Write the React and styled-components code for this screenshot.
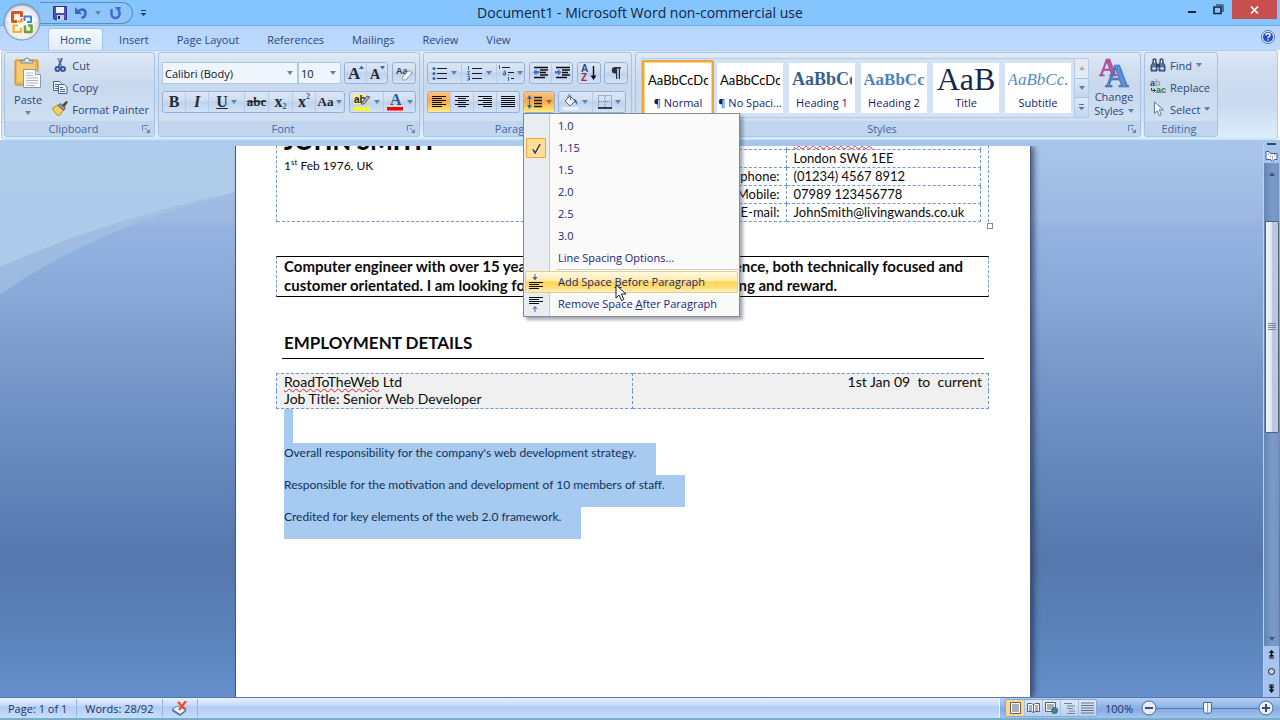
import React from "react";
import styled, { createGlobalStyle, css } from "styled-components";

const uiFont = `"Open Sans", "Noto Sans", sans-serif`;
const docFont = `Lato, "Open Sans", sans-serif`;
const serifFont = `"Liberation Serif", serif`;
const navy = "#2b477c";

const GlobalStyle = createGlobalStyle`
  *, *::before, *::after { box-sizing: border-box; }
  body { margin: 0; font-family: ${uiFont}; font-size: 11px; color: ${navy}; }
  button, select, input { font: inherit; color: inherit; margin: 0; }
  button { background: none; border: 0; padding: 0; cursor: default; }
  svg { display: block; flex: none; }
`;

/* ---------- window frame ---------- */

const Window = styled.div`
  display: flex;
  flex-direction: column;
  height: 100vh;
  overflow: hidden;
`;

const TitleBar = styled.header`
  position: relative;
  display: grid;
  grid-template-columns: 1fr auto 1fr;
  align-items: center;
  height: 26px;
  background: #84c5ff;
  border-bottom: 1px solid #6fa9df;
`;

const TitleTools = styled.div`
  display: flex;
  align-items: center;
  padding-left: 40px;
`;

const Orb = styled.button`
  position: absolute;
  left: 3px;
  top: 3px;
  z-index: 3;
`;

const QuickAccess = styled.div`
  display: flex;
  align-items: center;
  gap: 8px;
  width: 93px;
  height: 22px;
  padding-left: 13px;
  border: 1px solid #5b8fc4;
  border-left: 0;
  border-radius: 0 11px 11px 0;
  background: #8fc6f8;
`;

const MoreButton = styled.button`
  margin-left: 7px;
`;

const Title = styled.h1`
  margin: 0;
  text-align: center;
  font-size: 14px;
  line-height: 26px;
  font-weight: 400;
  color: #14243c;
`;

const WindowButtons = styled.div`
  display: flex;
  align-self: flex-start;
  justify-content: flex-end;
  padding-right: 3px;
`;

const WindowButton = styled.button`
  display: flex;
  align-items: center;
  justify-content: center;
  width: ${(p) => (p.$close ? 45 : 27)}px;
  height: 19px;
  background: ${(p) => (p.$close ? "#c84f50" : "none")};
`;

const TabStrip = styled.nav`
  display: flex;
  align-items: flex-end;
  gap: 4px;
  height: 24px;
  padding: 0 5px 0 48px;
  background: linear-gradient(#b6d5fd, #bedafd);
`;

const Tab = styled.button`
  height: 22px;
  padding: 0 11px;
  font-size: 11px;
  line-height: 20px;
  border: 1px solid transparent;
  border-bottom: 0;
  border-radius: 3px 3px 0 0;
  ${(p) =>
    p.$active &&
    css`
      background: linear-gradient(#f4f9ff, #e1ecf9);
      border-color: #9fc1ec;
    `}
`;

const HelpButton = styled.button`
  margin: 0 0 6px auto;
`;

/* ---------- ribbon ---------- */

const Ribbon = styled.section`
  position: relative;
  z-index: 2;
  display: flex;
  gap: 3px;
  height: 90px;
  margin: 0 2px 0 1px;
  padding: 1px 2px;
  background: linear-gradient(#dfe9f6, #d0def0 22%, #c9daf0 60%, #dcedfb);
  border: 1px solid #b0cbee;
  border-bottom: 2px solid #c5e8ff;
  border-radius: 3px;
`;

const Group = styled.section`
  display: flex;
  flex-direction: column;
  flex: none;
  width: ${(p) => p.$width}px;
  border: 1px solid #a8c2e4;
  border-radius: 3px;
  background: linear-gradient(#dfe8f5, #d2dff0 20%, #c8d9ee 40%, #d3e3f5);
`;

const GroupBody = styled.div`
  flex: 1;
  display: flex;
  flex-direction: ${(p) => (p.$rows ? "column" : "row")};
  gap: ${(p) => (p.$rows ? 7 : 0)}px;
  padding: ${(p) => (p.$rows ? "9px 3px 0" : "1px 5px 0")};
`;

const GroupFooter = styled.footer`
  display: flex;
  align-items: center;
  height: 15px;
  padding-right: 4px;
  background: #c1d5ee;
  color: #44699f;
  font-size: 11px;
  line-height: 15px;
`;

const GroupName = styled.span`
  flex: 1;
  text-align: center;
`;

const ToolRow = styled.div`
  display: flex;
  height: 22px;
`;

const ToolSet = styled.div`
  position: relative;
  display: flex;
  height: 22px;
  margin-right: ${(p) => p.$gap || 0}px;
  border: 1px solid #96b1d7;
  border-radius: 3px;
  background: linear-gradient(#dde8f6, #cddcf0 45%, #bfd2ec 50%, #d2e2f6);
`;

const Tool = styled.button`
  display: flex;
  align-items: center;
  justify-content: center;
  gap: 3px;
  width: ${(p) => p.$width}px;
  color: #23292f;
  font-family: ${serifFont};
  font-size: 16px;
  line-height: 20px;
  font-weight: 700;
  font-style: ${(p) => (p.$italic ? "italic" : "normal")};
  & + & {
    border-left: 1px solid #b7cbe6;
  }
  ${(p) =>
    p.$on &&
    css`
      background: linear-gradient(#f9c583, #f6a94d 45%, #fdd25f 80%, #fff08e);
    `}
`;

const SmallGlyph = styled.span`
  font-size: 13px;
  text-decoration: ${(p) => p.$line || "none"};
`;

const Script = styled.span`
  align-self: ${(p) => (p.$up ? "flex-start" : "flex-end")};
  margin-left: -3px;
  font-size: 8px;
  line-height: 10px;
  color: #2c5aa8;
`;

const Combo = styled.label`
  display: grid;
  width: ${(p) => p.$width}px;
  margin-right: ${(p) => p.$gap || 0}px;
  height: 22px;
  background: #eff5fd;
  border: 1px solid #b0c7e6;
  align-items: center;
  > * {
    grid-area: 1 / 1;
  }
  > svg {
    justify-self: end;
    margin-right: 4px;
    pointer-events: none;
  }
`;

const ComboSelect = styled.select`
  appearance: none;
  width: 100%;
  height: 20px;
  padding: 0 0 0 2px;
  border: 0;
  background: none;
  color: #10151d;
  font-size: 11px;
`;

const BigButton = styled.button`
  display: flex;
  flex-direction: column;
  align-items: center;
  width: ${(p) => p.$width}px;
  margin-top: 3px;
  font-size: 11px;
  line-height: 13px;
  gap: ${(p) => p.$gap}px;
  align-self: flex-start;
`;

const Inline = styled.span`
  display: flex;
  align-items: center;
  gap: 4px;
`;

const Stack = styled.div`
  display: flex;
  flex-direction: column;
`;

const SmallButton = styled.button`
  display: flex;
  align-items: center;
  gap: 4px;
  height: 22px;
  font-size: 11px;
  white-space: nowrap;
`;

const ClipItem = styled(SmallButton)`
  margin-left: 6px;
`;

const Gallery = styled.div`
  display: flex;
  width: 449px;
  height: 60px;
  margin: 4px 4px 0 0;
  border: 1px solid #b5cbe8;
  background: #d3e2f5;
`;

const StyleTile = styled.button`
  display: flex;
  flex-direction: column;
  width: 72px;
  height: 56px;
  margin-top: 1px;
  padding: 1px;
  border: 2px solid ${(p) => (p.$on ? "#eda53d" : "transparent")};
  border-radius: 2px;
  background: ${(p) => (p.$on ? "#ffd777" : "none")};
`;

const TileFace = styled.span`
  display: flex;
  flex-direction: column;
  width: 100%;
  height: 100%;
  padding: 0 3px;
  background: #fff;
  overflow: hidden;
`;

const Sample = styled.span`
  display: flex;
  align-items: center;
  justify-content: ${(p) => (p.$center ? "center" : "flex-start")};
  height: 33px;
  overflow: hidden;
  white-space: nowrap;
  font-family: ${(p) => (p.$serif ? serifFont : docFont)};
  font-size: ${(p) => p.$size}px;
  font-weight: ${(p) => (p.$bold ? 700 : 400)};
  font-style: ${(p) => (p.$italic ? "italic" : "normal")};
  color: ${(p) => p.$color};
`;

const TileName = styled.span`
  height: 16px;
  font-size: 11px;
  line-height: 13px;
  white-space: nowrap;
  text-align: center;
  margin: 0 -4px;
  color: #161b6d;
`;

const GalleryArrows = styled.div`
  display: flex;
  flex-direction: column;
  flex: 1;
  border-left: 1px solid #b5cbe8;
`;

const GalleryArrow = styled.button`
  flex: 1;
  display: flex;
  align-items: center;
  justify-content: center;
  background: ${(p) => (p.$off ? "#e6e9ee" : "linear-gradient(#dce9f9, #c2d6f0)")};
  & + & {
    border-top: 1px solid #a8c2e4;
  }
`;

/* ---------- drop-down menu ---------- */

const Menu = styled.div`
  position: absolute;
  left: -1px;
  top: 21px;
  width: 217px;
  padding: 1px 0;
  border: 1px solid #858a92;
  background: linear-gradient(90deg, #e9edf1 25px, #c6c9ce 25px, #c6c9ce 26px, #fafafb 26px);
  box-shadow: 3px 3px 3px rgba(40, 50, 70, 0.4);
  font-family: ${uiFont};
  font-weight: 400;
`;

const MenuItem = styled.button`
  display: grid;
  grid-template-columns: 25px 1fr;
  column-gap: 8px;
  align-items: center;
  width: calc(100% - 2px);
  margin-left: 1px;
  height: 22px;
  text-align: left;
  font-size: 11px;
  line-height: 20px;
  color: #17267a;
  border-radius: 2px;
  ${(p) =>
    p.$hot &&
    css`
      background: linear-gradient(#fffbe8, #ffeaa8 45%, #ffd34e 50%, #ffdf7c 75%, #fff3c4);
      box-shadow: inset 0 0 0 1px #e3cf8c;
    `}
`;

const MenuIcon = styled.span`
  display: flex;
  align-items: center;
  justify-content: center;
  width: 20px;
  height: 20px;
  margin-left: 1px;
  ${(p) =>
    p.$checked &&
    css`
      background: #ffdf94;
      border: 1px solid #f0a540;
      border-radius: 1px;
    `}
`;

const MenuRule = styled.hr`
  height: 1px;
  margin: 0 0 1px 33px;
  border: 0;
  background: #c9cbcf;
`;

const Pointer = styled.svg`
  position: absolute;
  left: 91px;
  top: 170px;
  pointer-events: none;
`;

/* ---------- document ---------- */

const Workspace = styled.main`
  position: relative;
  flex: 1;
  display: flex;
  min-height: 0;
  padding-top: 6px;
  overflow: hidden;
  background: linear-gradient(
    #aac5ea,
    #9eb9e1 14%,
    #94b2e1 16%,
    #8fb0de 21%,
    #7c9bcb 39%,
    #7293c5 46%,
    #6084b9 63%,
    #5577ae 75%,
    #5b85bc 90%,
    #668fcc
  );
`;

const Swoosh = styled.svg`
  position: absolute;
  left: 0;
  top: 0;
`;

const Viewport = styled.div`
  position: relative;
  flex: 1;
  display: flex;
  justify-content: center;
  overflow: hidden;
  padding-left: 3px;
`;

const Page = styled.article`
  width: 794px;
  height: 100%;
  overflow: hidden;
  padding: 0 41px 0 40px;
  background: #fff;
  box-shadow: -1px 0 0 #46597c, 1px 0 0 #46597c, 4px 0 6px rgba(30, 45, 80, 0.7);
  font-family: ${docFont};
  color: #0b0b0b;
`;

const Scrolled = styled.div`
  margin-top: -15px;
`;

const dashed = "1px dashed #7398cf";

const ContactGrid = styled.div`
  position: relative;
  display: grid;
  grid-template-columns: 356px 1fr;
  height: 91px;
  border-left: ${dashed};
  border-right: ${dashed};
`;

const Person = styled.div`
  padding-left: 7px;
  border-bottom: ${dashed};
`;

const PersonName = styled.h2`
  margin: -6px 0 0;
  font-size: 24px;
  line-height: 32px;
  font-weight: 900;
`;

const Born = styled.p`
  margin: 0;
  font-size: 12px;
  line-height: 18px;
  sup {
    font-size: 8px;
    line-height: 8px;
  }
`;

const ContactTable = styled.table`
  width: calc(100% - 7px);
  height: 91px;
  border-collapse: collapse;
  border-bottom: ${dashed};
  font-size: 13px;
  line-height: 17px;
  th,
  td {
    height: 18px;
    padding: 0 7px;
    font-weight: 400;
    text-align: left;
    border-right: ${dashed};
    border-bottom: ${dashed};
    white-space: nowrap;
  }
  th {
    width: 153px;
    text-align: right;
    padding-right: 6px;
  }
`;

const Misspelt = styled.span`
  text-decoration: underline wavy #e0202c 1px;
  text-decoration-skip-ink: none;
`;

const ResizeHandle = styled.span`
  position: absolute;
  right: -5px;
  bottom: -7px;
  width: 6px;
  height: 6px;
  border: 1px solid #8a8a8a;
  background: #fff;
`;

const Summary = styled.div`
  height: 41px;
  margin-top: 34px;
  padding: 0 7px;
  border: 1px solid #000;
  border-left: ${dashed};
  border-right: ${dashed};
  font-size: 15px;
  line-height: 19px;
  font-weight: 700;
`;

const SummaryLine = styled.div`
  display: flex;
  justify-content: space-between;
  width: ${(p) => p.$width}px;
  white-space: nowrap;
`;

const SectionTitle = styled.h3`
  margin: 34px 5px 14px 6px;
  padding: 0 0 3px 2px;
  border-bottom: 1px solid #000;
  font-size: 17px;
  line-height: 24px;
  font-weight: 700;
`;

const JobTable = styled.table`
  width: 100%;
  height: 35px;
  border-collapse: collapse;
  table-layout: fixed;
  background: #f0f0f0;
  font-size: 14px;
  line-height: 16px;
  td {
    height: 17px;
    padding: 0 7px 1px;
    vertical-align: top;
    border-left: ${dashed};
    border-right: ${dashed};
  }
  tr:first-child td {
    border-top: ${dashed};
  }
  tr:last-child td {
    border-bottom: ${dashed};
  }
  td + td {
    text-align: right;
    padding-right: 6px;
    white-space: pre;
  }
`;

const Selection = styled.div`
  display: flex;
  flex-direction: column;
  align-items: flex-start;
  padding-left: 8px;
`;

const SelectedLine = styled.p`
  min-width: 9px;
  height: ${(p) => (p.$blank ? 34 : 32)}px;
  margin: 0;
  padding-right: ${(p) => (p.$blank ? 0 : 20)}px;
  background: #a6caf0;
  color: #123257;
  font-size: 12px;
  line-height: 19px;
  white-space: nowrap;
`;

/* ---------- scroll bar ---------- */

const ScrollColumn = styled.div`
  display: flex;
  flex-direction: column;
  align-items: center;
  width: 16px;
  margin: -4px 1px 0 0;
  border-left: 1px solid #b4d4fa;
  background: #a7c3ee;
`;

const SplitBar = styled.span`
  width: 9px;
  height: 2px;
  margin: 1px 0 5px;
  background: #33466b;
`;

const Track = styled.div`
  display: flex;
  flex-direction: column;
  align-items: center;
  flex: 1;
  width: 100%;
  margin-top: 1px;
  background: linear-gradient(90deg, #6486b5, #7b9ac6 60%, #7693c0);
`;

const TrackGap = styled.div`
  flex: ${(p) => p.$grow};
`;

const Thumb = styled.div`
  display: flex;
  align-items: center;
  justify-content: center;
  flex: 212;
  width: 14px;
  border: 1px solid #52627d;
  border-radius: 1px;
  background: linear-gradient(90deg, #f3f5fa, #e1e7f2 45%, #b9c6da 55%, #bccadb);
`;

const ScrollButton = styled.button`
  display: flex;
  align-items: center;
  justify-content: center;
  height: ${(p) => p.$height}px;
`;

/* ---------- status bar ---------- */

const StatusBar = styled.footer`
  display: flex;
  align-items: center;
  height: 23px;
  border-top: 1px solid #5877a8;
  border-bottom: 2px solid #79aec9;
  background: linear-gradient(#e6f1ff, #c7dcfa 35%, #b1cdf6 45%, #c9defb);
  color: #1c3567;
  font-size: 11px;
`;

const StatusCell = styled.div`
  display: flex;
  align-items: center;
  height: 18px;
  padding: 0 9px 0 8px;
  border-right: 1px solid #94b3dd;
`;

const ViewControls = styled.div`
  display: flex;
  align-items: center;
  align-self: stretch;
  margin-left: auto;
  padding: 0 6px 0 5px;
  border-left: 1px solid #eef6ff;
  background: linear-gradient(#b5cff5, #8fb3e6 45%, #86abe2 55%, #a4c4f0);
`;

const ViewSet = styled.div`
  display: flex;
  height: 18px;
  border: 1px solid #87a8d6;
  border-radius: 2px;
  background: linear-gradient(#dce9fb, #b9d0f0);
`;

const ViewButton = styled.button`
  display: flex;
  align-items: center;
  justify-content: center;
  width: 18px;
  background: ${(p) => (p.$on ? "#fbd68c" : "none")};
  & + & {
    border-left: 1px solid #a8c2e4;
  }
`;

const ZoomLabel = styled.button`
  width: 44px;
  font-size: 11px;
`;

const ZoomSlider = styled.input`
  appearance: none;
  width: 101px;
  height: 18px;
  background: linear-gradient(#5b7db1, #5b7db1) center / 100% 1px no-repeat;
  &::-webkit-slider-thumb {
    appearance: none;
    width: 9px;
    height: 12px;
    border: 1px solid #4b6793;
    border-radius: 1px 1px 5px 5px;
    background: linear-gradient(90deg, #f4f8fe 3px, #8aa2c8 3px, #8aa2c8 4px, #e5edf9 4px);
  }
`;

/* ---------- icons ---------- */

const Arrow = ({ up, color = "#6480ab" }) => (
  <svg width="6" height="4" viewBox="0 0 6 4">
    <path d={up ? "M0 4h6L3 0z" : "M0 0h6L3 4z"} fill={color} />
  </svg>
);

const Launcher = () => (
  <svg width="8" height="8" viewBox="0 0 8 8" fill="none" stroke="#6884b0">
    <path d="M0.5 6V0.5H6M3 3l3 3" />
    <path d="M8 4v4H4z" fill="#6884b0" stroke="none" />
  </svg>
);

const OrbIcon = () => (
  <svg width="38" height="38" viewBox="0 0 38 38">
    <defs>
      <radialGradient id="orb" cx="50%" cy="62%" r="62%">
        <stop offset="0" stopColor="#fff" />
        <stop offset="0.6" stopColor="#e8ebf1" />
        <stop offset="1" stopColor="#a4afc3" />
      </radialGradient>
    </defs>
    <circle cx="19" cy="19" r="18" fill="url(#orb)" stroke="#7d8ba5" />
    <path d="M3 18a16 15 0 0 1 32 0q-16 5-32 0z" fill="#fff" opacity=".55" />
    <g fill="none" strokeLinejoin="round">
      <path d="M14 18.500H9.500V9.500H18.500V14" stroke="#dd5513" strokeWidth="3" />
      <path d="M15 18.500h3.500V15" stroke="#f08a2c" strokeWidth="2" />
      <path d="M21.500 18v-4.500H28V19h-4" stroke="#3e84d6" strokeWidth="2" />
      <path d="M15 22.500h-4.500v6.500h7.500V24.500" stroke="#f2b61c" strokeWidth="2.200" />
      <path d="M22 22.500v6.500h6.500v-6.500h-3.500" stroke="#6ba52f" strokeWidth="2.600" />
    </g>
  </svg>
);

const SaveIcon = () => (
  <svg width="14" height="14" viewBox="0 0 14 14">
    <path d="M0.500 0.500h13v13h-12l-1-1z" fill="#4b51b5" stroke="#2d3191" />
    <path d="M3 1h8v6H3z" fill="#eef2fb" />
    <path d="M4 9h7v5H4z" fill="#c4cce0" />
    <path d="M5 10h2v3H5z" fill="#20246f" />
  </svg>
);

const UndoIcon = () => (
  <svg width="12" height="12" viewBox="0 0 12 12" fill="none" stroke="#4467bd" strokeWidth="2.600">
    <path d="M3 4.500C6 1.500 10.500 2 10.500 6c0 3-2 4.500-4 5" />
    <path d="M0 0v7h7z" fill="#4467bd" stroke="none" />
  </svg>
);

const RedoIcon = () => (
  <svg width="13" height="13" viewBox="0 0 13 13" fill="none" stroke="#3f6fd0" strokeWidth="2.600">
    <path d="M2.500 2v5a4 4 0 0 0 8 0V4" />
    <path d="M6 0h6l-2 6z" fill="#3f6fd0" stroke="none" />
  </svg>
);

const MoreIcon = ({ color = "#1c3c6e" }) => (
  <svg width="7" height="7" viewBox="0 0 7 7" fill={color}>
    <path d="M1 0h5v1H1zM0.500 3h6l-3 3z" />
  </svg>
);

const HelpIcon = () => (
  <svg width="14" height="14" viewBox="0 0 14 14">
    <circle cx="7" cy="7" r="6.500" fill="#d9e9fc" stroke="#5476ad" />
    <circle cx="7" cy="7" r="5" fill="#1f4fc0" />
    <path d="M5 5.500q0-2 2-2t2 1.700q0 1-1.200 1.600-.8.400-.8 1.400M7 9.300v1.300" fill="none" stroke="#fff" strokeWidth="1.400" />
  </svg>
);

const PasteIcon = () => (
  <svg width="28" height="31" viewBox="0 0 28 31">
    <rect x="1" y="3" width="23" height="25" rx="1.500" fill="#edb64f" stroke="#bd8a35" />
    <path d="M3 5h18v20H3z" fill="#f5ca73" />
    <path d="M7 6V3.500h3.500a2.500 2.500 0 0 1 5 0H19V6z" fill="#d3d8dd" stroke="#7a838d" />
    <circle cx="13" cy="3" r="1" fill="#fff" />
    <path d="M9.500 12.500h12l5 5v13h-17z" fill="#fff" stroke="#8698b4" />
    <path d="M21.500 12.500v5h5" fill="#dfe7f2" stroke="#8698b4" />
    <path d="M12 16h7M12 18.500h7M12 21h12M12 23.500h12M12 26h12M12 28.500h9" stroke="#a9b6c9" />
  </svg>
);

const CutIcon = () => (
  <svg width="16" height="16" viewBox="0 0 16 16" fill="none">
    <path d="M6 1l4 10" stroke="#7f8ea8" strokeWidth="2" />
    <path d="M10 1L6.500 10" stroke="#4f6287" strokeWidth="2" />
    <circle cx="5.500" cy="12" r="2" stroke="#3257a5" strokeWidth="2" />
    <circle cx="11" cy="12" r="2" stroke="#3257a5" strokeWidth="2" />
  </svg>
);

const CopyIcon = () => (
  <svg width="16" height="16" viewBox="0 0 16 16" stroke="#49639a">
    <path d="M1.500 2.500h6l2 2v7h-8z" fill="#f7faff" />
    <path d="M3 5.500h3M3 7.500h3M3 9.500h3" />
    <path d="M6.500 5.500h6l2.500 2.500v6.500H6.500z" fill="#f7faff" />
    <path d="M8 8.500h3M8 10.500h5M8 12.500h5" />
  </svg>
);

const PainterIcon = () => (
  <svg width="16" height="16" viewBox="0 0 16 16">
    <path d="M0.500 7l5-3 6 5-4 5.500q-4 0-7-7.500z" fill="#f0d163" stroke="#b38f2b" />
    <path d="M6 4.500l2-2 5.500 4.500-2 2.500z" fill="#8c95a5" stroke="#5c6370" />
    <path d="M10 4l4-4 2 1-3.500 5z" fill="#52473f" />
  </svg>
);

const ClearIcon = () => (
  <svg width="18" height="18" viewBox="0 0 18 18">
    <text x="1" y="10" fontFamily="Liberation Sans" fontSize="9" fontWeight="700" fill="#33373d">Aa</text>
    <path d="M7 14l6-7q3-1 4 2l-6 7q-3 1-4-2z" fill="#f7f8fb" stroke="#8790a3" />
  </svg>
);

const HighlightIcon = () => (
  <svg width="18" height="18" viewBox="0 0 18 18">
    <path d="M1 1h10v10H1z" fill="#f3f08a" />
    <text x="1" y="10" fontFamily="Liberation Sans" fontSize="10" fill="#222">ab</text>
    <path d="M8 11l6-8 3 1-6 7z" fill="#a8b0bd" stroke="#565d69" />
    <path d="M1 14h16v3.500H1z" fill="#ffff00" />
  </svg>
);

const FontColorIcon = () => (
  <svg width="17" height="18" viewBox="0 0 17 18">
    <text x="3" y="12" fontFamily="Liberation Serif" fontSize="16" fontWeight="700" fill="#35568f">A</text>
    <path d="M0 14h16v3.500H0z" fill="#ff0000" />
  </svg>
);

const SizeIcon = ({ up }) => (
  <svg width="18" height="18" viewBox="0 0 18 18">
    <text x={up ? 1 : 2} y="15" fontFamily="Liberation Serif" fontSize={up ? 17 : 14} fontWeight="700" fill="#23292f">A</text>
    <path d={up ? "M12 5h5l-2.500-3.500z" : "M12 2h5l-2.500 3.500z"} fill="#3d63a6" />
  </svg>
);

const ListIcon = ({ kind }) => (
  <svg width="16" height="16" viewBox="0 0 16 16">
    {kind === "bullets" && (
      <g fill="#3f61a3">
        <circle cx="2" cy="3.500" r="1.500" />
        <circle cx="2" cy="8.500" r="1.500" />
        <circle cx="2" cy="13.500" r="1.500" />
      </g>
    )}
    {kind === "numbers" && (
      <path d="M1.500 1v4M0.500 6.500h2l-2 3h2.500M0.500 11.500h2v3.500h-2.500M1 13.500h1.500" stroke="#3f61a3" fill="none" />
    )}
    {kind === "levels" ? (
      <g>
        <path d="M1.500 0v4M5.500 6q2-1 2 1v3h-2v-2h2M10.500 12v4M10.500 9.500v1" stroke="#3f61a3" fill="none" />
        <path d="M4 2.500h8M10 7.500h6M13 13.500h3" stroke="#1a1d24" />
      </g>
    ) : (
      <path d="M5 3.500h10M5 8.500h10M5 13.500h10" stroke="#1a1d24" />
    )}
  </svg>
);

const IndentIcon = ({ right }) => (
  <svg width="17" height="14" viewBox="0 0 17 14">
    <path d="M2 1.500h14M8 4h8M8 6.500h6M8 9h8M2 11.500h11" stroke="#0c0e14" strokeWidth="1.500" />
    <path d={right ? "M1 5h3V3l3.500 3.200L4 9.500V7.500H1z" : "M7.500 5h-3V3L1 6.200l3.500 3.300V7.500h3z"} fill="#4a6ebb" />
  </svg>
);

const SortIcon = () => (
  <svg width="16" height="18" viewBox="0 0 16 18">
    <text x="0" y="8" fontFamily="Liberation Sans" fontSize="10" fill="#27489b">A</text>
    <text x="0" y="17" fontFamily="Liberation Sans" fontSize="10" fill="#a4293c">Z</text>
    <path d="M12.500 2v12" stroke="#0c0e14" strokeWidth="1.400" />
    <path d="M9.500 11.500h6l-3 4.500z" fill="#0c0e14" />
  </svg>
);

const PilcrowIcon = () => (
  <svg width="12" height="14" viewBox="0 0 12 14">
    <path d="M5 1h6v1.500H10V13H8.800V2.500H7.200V13H6V7.500H5A3.200 3.200 0 0 1 5 1z" fill="#2b3140" />
  </svg>
);

const alignRows = {
  left: [14, 10, 14, 10, 14, 10],
  center: [14, 8, 14, 8, 14, 8],
  right: [14, 9, 14, 9, 14, 9],
  justify: [14, 14, 14, 14, 14, 14],
};

const AlignIcon = ({ kind, color = "#0c0e14" }) => (
  <svg width="14" height="12" viewBox="0 0 14 12" fill={color}>
    {alignRows[kind].map((w, i) => (
      <rect
        key={i}
        x={kind === "center" ? (14 - w) / 2 : kind === "right" ? 14 - w : 0}
        y={i * 2}
        width={w}
        height="1"
      />
    ))}
  </svg>
);

const SpacingIcon = () => (
  <svg width="16" height="16" viewBox="0 0 16 16">
    <path d="M7 3.500h8M7 6.500h8M7 9.500h8M7 12.500h8" stroke="#1a1d24" strokeWidth="1.300" />
    <path d="M0 5h5L2.500 1zM0 11h5l-2.500 4zM2 5h1v6H2z" fill="#3f61b3" />
  </svg>
);

const FillIcon = () => (
  <svg width="16" height="16" viewBox="0 0 16 16">
    <path d="M2 7l5-5 5 5-5 5z" fill="#f3f6fb" stroke="#56698d" />
    <path d="M5 4V1.500q1.500-2 2.500 0V6" fill="none" stroke="#56698d" />
    <path d="M11 5q4 1 3 6-1-3-3-3z" fill="#3865ac" />
    <path d="M0 13h15v3H0z" fill="#eef3fb" />
  </svg>
);

const BorderIcon = () => (
  <svg width="14" height="14" viewBox="0 0 14 14">
    <path d="M.5.500h13v12H.5zM7 1v11M1 6.500h12" fill="none" stroke="#6d7c98" strokeDasharray="1 1" />
    <path d="M0 13h14" stroke="#0c0e14" strokeWidth="1.500" />
  </svg>
);

const ChangeStylesIcon = () => (
  <svg width="30" height="32" viewBox="0 0 30 32">
    <text x="0" y="19" fontFamily="Liberation Serif" fontSize="25" fontWeight="700" fill="#c251a8" stroke="#8b3b86" strokeWidth=".5">A</text>
    <text x="6" y="30" fontFamily="Liberation Serif" fontSize="33" fontWeight="700" fill="#5a90d8" stroke="#315a9d" strokeWidth=".7">A</text>
  </svg>
);

const FindIcon = () => (
  <svg width="16" height="14" viewBox="0 0 16 14">
    <path d="M3 1h3v3l1 2v7H1V8l2-4zM10 1h3v3l2 4v5H9V6l1-2z" fill="#5c7198" stroke="#2e426c" />
    <path d="M6 6h4v3H6z" fill="#2e426c" />
    <path d="M2.500 9.500h3v2h-3zM10.500 9.500h3v2h-3zM4 2h1v3H4zM11 2h1v3h-1z" fill="#e9eff8" />
  </svg>
);

const ReplaceIcon = () => (
  <svg width="16" height="16" viewBox="0 0 16 16">
    <text x="0" y="7" fontFamily="Liberation Sans" fontSize="9" fontWeight="700" fill="#3b4048">a<tspan fill="#979ca6">b</tspan></text>
    <text x="6" y="14" fontFamily="Liberation Sans" fontSize="9" fontWeight="700" fill="#2f7a2b">ac</text>
    <path d="M1.500 9v2.500H5M3.500 9.500l2 2-2 2" fill="none" stroke="#2b3a6b" />
  </svg>
);

const arrowPath = "M1 1v13l3-3 2.500 5.500 2.300-1L6.300 10H11z";

const SelectIcon = () => (
  <svg width="16" height="16" viewBox="-3 0 16 18">
    <path d={arrowPath} fill="#fff" stroke="#51658f" />
  </svg>
);

const ParagraphSpaceIcon = ({ after }) => (
  <svg width="14" height="16" viewBox="0 0 14 16">
    <path
      d={after ? "M0 1.500h14M0 3.500h10M0 5.500h14M0 7.500h10" : "M0 8.500h14M0 10.500h10M0 12.500h14M0 14.500h10"}
      stroke="#0c0e14"
    />
    <path d={after ? "M3.500 13h5L6 10zM5.500 12h1v4h-1z" : "M3.500 3h5L6 6.500zM5.500 0h1v4h-1z"} fill="#4a63ab" />
  </svg>
);

const ProofIcon = () => (
  <svg width="17" height="15" viewBox="0 0 17 15">
    <path d="M1 8l6-3 8 4-6 4.500z" fill="#f3f7fd" stroke="#5f79a8" />
    <path d="M1 8v2l8 5 6-4.500V9l-6 4.500z" fill="#4d70ae" />
    <path d="M7 1l8 8M15 0L8 9" stroke="#ec4a32" strokeWidth="2.200" />
  </svg>
);

const ViewIcon = ({ kind }) => (
  <svg width="13" height="12" viewBox="0 0 13 12" fill="none" stroke="#5b5f6c">
    {kind === "print" && (
      <>
        <path d="M1.500.500h10v11h-10z" fill="#fff" />
        <path d="M3 3h7M3 5h7M3 7h7M3 9h7" />
      </>
    )}
    {kind === "reading" && (
      <>
        <path d="M.5 1.500h4l2 1 2-1h4v8h-4l-2 1-2-1h-4zM6.500 2.500v8" fill="#fff" />
        <path d="M2 4h3M2 6h3M2 8h3M8 4h3M8 6h3M8 8h3" />
      </>
    )}
    {kind === "web" && (
      <>
        <path d="M.5.500h10v9H.5z" fill="#fff" />
        <path d="M2 3h7M2 5h7M2 7h4" />
        <circle cx="9.500" cy="8.500" r="3" fill="#3f8b8c" stroke="#2e5f96" />
      </>
    )}
    {kind === "outline" && <path d="M1 1.500h8M4 4h8M4 6.500h6M6 9h6M4 11.500h8" stroke="#7a8190" />}
    {kind === "draft" && <path d="M0 1h13M0 3.500h13M0 6h13M0 8.500h13M0 11h13" stroke="#6a707e" />}
  </svg>
);

const ZoomIcon = ({ plus }) => (
  <svg width="16" height="16" viewBox="0 0 16 16">
    <circle cx="8" cy="8" r="7" fill="#e4edf9" stroke="#4d6893" />
    <path d={plus ? "M4 8h8M8 4v8" : "M4 8h8"} stroke="#3b506f" strokeWidth="2" />
  </svg>
);

const RulerIcon = () => (
  <svg width="13" height="12" viewBox="0 0 13 12">
    <path d="M1 1.500h3l1.500 2h6.500v6H9.500l-2 2-2-2H1z" fill="#f2f6fd" stroke="#4d5d80" />
    <path d="M5 6h1M7 7h1M9 5h1M7 9h1M3 4h1" stroke="#5b6b8c" />
  </svg>
);

const BrowseIcon = ({ kind }) => (
  <svg width="9" height="9" viewBox="0 0 9 9" fill="#0c0e14">
    {kind === "prev" && <path d="M4.500 0L7.500 3h-6zM4.500 3.500l3 3h-6zM2 7.500h5v1H2zM4 2h1v5H4z" />}
    {kind === "next" && <path d="M2 .5h5v1H2zM1.500 2.500h6l-3 3zM1.500 5.500h6l-3 3.500zM4 1h1v3H4z" />}
    {kind === "object" && <circle cx="4.500" cy="4.500" r="3" fill="#c9d2dd" stroke="#1a2030" />}
  </svg>
);

/* ---------- sections ---------- */

const RibbonGroup = ({ name, width, launcher = true, children, rows }) => (
  <Group $width={width} aria-label={name}>
    <GroupBody $rows={rows}>{children}</GroupBody>
    <GroupFooter>
      <GroupName>{name}</GroupName>
      {launcher && (
        <button aria-label={`${name} options`}>
          <Launcher />
        </button>
      )}
    </GroupFooter>
  </Group>
);

const ClipboardGroup = () => (
  <RibbonGroup name="Clipboard" width={151}>
    <BigButton $width={38} $gap={5}>
      <PasteIcon />
      Paste
      <Arrow />
    </BigButton>
    <Stack>
      <ClipItem><CutIcon />Cut</ClipItem>
      <ClipItem><CopyIcon />Copy</ClipItem>
      <ClipItem><PainterIcon />Format Painter</ClipItem>
    </Stack>
  </RibbonGroup>
);

const FontGroup = () => (
  <RibbonGroup name="Font" width={262} rows>
    <ToolRow>
      <Combo $width={136}>
        <ComboSelect aria-label="Font" defaultValue="Calibri (Body)">
          <option>Calibri (Body)</option>
        </ComboSelect>
        <Arrow />
      </Combo>
      <Combo $width={43} $gap={3}>
        <ComboSelect aria-label="Font size" defaultValue="10">
          <option>10</option>
        </ComboSelect>
        <Arrow />
      </Combo>
      <ToolSet $gap={4}>
        <Tool $width={21} aria-label="Grow font"><SizeIcon up /></Tool>
        <Tool $width={21} aria-label="Shrink font"><SizeIcon /></Tool>
      </ToolSet>
      <ToolSet>
        <Tool $width={22} aria-label="Clear formatting"><ClearIcon /></Tool>
      </ToolSet>
    </ToolRow>
    <ToolRow>
      <ToolSet $gap={4}>
        <Tool $width={22}>B</Tool>
        <Tool $width={23} $italic>I</Tool>
        <Tool $width={36}><u>U</u> <Arrow /></Tool>
        <Tool $width={24}><SmallGlyph $line="line-through">abc</SmallGlyph></Tool>
        <Tool $width={24}>x<Script>2</Script></Tool>
        <Tool $width={23}>x<Script $up>2</Script></Tool>
        <Tool $width={29}><SmallGlyph>Aa</SmallGlyph><Arrow /></Tool>
      </ToolSet>
      <ToolSet>
        <Tool $width={33} aria-label="Highlight colour"><HighlightIcon /><Arrow /></Tool>
        <Tool $width={32} aria-label="Font colour"><FontColorIcon /><Arrow /></Tool>
      </ToolSet>
    </ToolRow>
  </RibbonGroup>
);

const spacingValues = ["1.0", "1.15", "1.5", "2.0", "2.5", "3.0"];

const SpacingMenu = () => (
  <Menu role="menu">
    {spacingValues.map((value) => (
      <MenuItem key={value} role="menuitem">
        <MenuIcon $checked={value === "1.15"}>
          {value === "1.15" && (
            <svg width="9" height="11" viewBox="0 0 10 12" fill="none" stroke="#27356f" strokeWidth="1.600">
              <path d="M1 7l2.500 4L9 1" />
            </svg>
          )}
        </MenuIcon>
        {value}
      </MenuItem>
    ))}
    <MenuItem role="menuitem">
      <MenuIcon />
      Line Spacing Options...
    </MenuItem>
    <MenuRule />
    <MenuItem role="menuitem" $hot>
      <MenuIcon><ParagraphSpaceIcon /></MenuIcon>
      <span>Add Space <u>B</u>efore Paragraph</span>
    </MenuItem>
    <MenuItem role="menuitem">
      <MenuIcon><ParagraphSpaceIcon after /></MenuIcon>
      <span>Remove Space <u>A</u>fter Paragraph</span>
    </MenuItem>
    <Pointer width="13" height="19" viewBox="0 0 13 19">
      <path d={arrowPath} fill="#fff" stroke="#1d2230" />
    </Pointer>
  </Menu>
);

const ParagraphGroup = () => (
  <RibbonGroup name="Paragraph" width={209} rows>
    <ToolRow>
      <ToolSet $gap={4}>
        <Tool $width={33} aria-label="Bullets"><ListIcon kind="bullets" /><Arrow /></Tool>
        <Tool $width={35} aria-label="Numbering"><ListIcon kind="numbers" /><Arrow /></Tool>
        <Tool $width={28} aria-label="Multilevel list"><ListIcon kind="levels" /><Arrow /></Tool>
      </ToolSet>
      <ToolSet $gap={4}>
        <Tool $width={21} aria-label="Decrease indent"><IndentIcon /></Tool>
        <Tool $width={21} aria-label="Increase indent"><IndentIcon right /></Tool>
      </ToolSet>
      <ToolSet $gap={3}>
        <Tool $width={22} aria-label="Sort"><SortIcon /></Tool>
      </ToolSet>
      <ToolSet>
        <Tool $width={22} aria-label="Show marks"><PilcrowIcon /></Tool>
      </ToolSet>
    </ToolRow>
    <ToolRow>
      <ToolSet $gap={3}>
        <Tool $width={22} $on aria-label="Align left"><AlignIcon kind="left" /></Tool>
        <Tool $width={23} aria-label="Centre"><AlignIcon kind="center" /></Tool>
        <Tool $width={23} aria-label="Align right"><AlignIcon kind="right" /></Tool>
        <Tool $width={23} aria-label="Justify"><AlignIcon kind="justify" /></Tool>
      </ToolSet>
      <ToolSet $gap={3}>
        <Tool $width={30} $on aria-label="Line spacing"><SpacingIcon /><Arrow color="#8b6a4e" /></Tool>
        <SpacingMenu />
      </ToolSet>
      <ToolSet>
        <Tool $width={33} aria-label="Shading"><FillIcon /><Arrow /></Tool>
        <Tool $width={33} aria-label="Borders"><BorderIcon /><Arrow /></Tool>
      </ToolSet>
    </ToolRow>
  </RibbonGroup>
);

const styleTiles = [
  { name: "¶ Normal", text: "AaBbCcDc", size: 13, color: "#000", on: true },
  { name: "¶ No Spaci...", text: "AaBbCcDc", size: 13, color: "#000" },
  { name: "Heading 1", text: "AaBbCc", size: 18, color: "#365f91", serif: true, bold: true },
  { name: "Heading 2", text: "AaBbCc", size: 17, color: "#4f81bd", serif: true, bold: true, center: true },
  { name: "Title", text: "AaB", size: 32, color: "#17294a", serif: true, center: true },
  { name: "Subtitle", text: "AaBbCc.", size: 17, color: "#5b8ac4", serif: true, italic: true, center: true },
];

const StylesGroup = () => (
  <RibbonGroup name="Styles" width={506}>
    <Gallery>
      {styleTiles.map((t) => (
        <StyleTile key={t.name} $on={t.on}>
          <TileFace>
            <Sample $size={t.size} $color={t.color} $serif={t.serif} $bold={t.bold} $italic={t.italic} $center={t.center}>
              {t.text}
            </Sample>
            <TileName>{t.name}</TileName>
          </TileFace>
        </StyleTile>
      ))}
      <GalleryArrows>
        <GalleryArrow $off aria-label="Previous styles"><Arrow up color="#a8adb5" /></GalleryArrow>
        <GalleryArrow aria-label="Next styles"><Arrow /></GalleryArrow>
        <GalleryArrow aria-label="More styles"><MoreIcon color="#5373a6" /></GalleryArrow>
      </GalleryArrows>
    </Gallery>
    <BigButton $width={42} $gap={1}>
      <ChangeStylesIcon />
      <span>Change</span>
      <Inline>Styles <Arrow /></Inline>
    </BigButton>
  </RibbonGroup>
);

const EditingGroup = () => (
  <RibbonGroup name="Editing" width={74} launcher={false}>
    <Stack>
      <SmallButton><FindIcon />Find <Arrow /></SmallButton>
      <SmallButton><ReplaceIcon />Replace</SmallButton>
      <SmallButton><SelectIcon />Select <Arrow /></SmallButton>
    </Stack>
  </RibbonGroup>
);

const contacts = [
  ["", <><Misspelt>Knightsbridge</Misspelt> Rg</>],
  ["", "London SW6 1EE"],
  ["Telephone:", "(01234) 4567 8912"],
  ["Mobile:", "07989 123456778"],
  ["E-mail:", "JohnSmith@livingwands.co.uk"],
];

const DocumentPage = () => (
  <Page>
    <Scrolled>
      <ContactGrid>
        <Person>
          <PersonName>JOHN SMITH</PersonName>
          <Born>1<sup>st</sup> Feb 1976, UK</Born>
        </Person>
        <ContactTable>
          <tbody>
            {contacts.map(([label, value], i) => (
              <tr key={i}>
                <th scope="row">{label}</th>
                <td>{value}</td>
              </tr>
            ))}
          </tbody>
        </ContactTable>
        <ResizeHandle />
      </ContactGrid>
      <Summary>
        <SummaryLine $width={679}>
          <span>Computer engineer with over 15 years</span>
          <span>of experience, both technically focused and</span>
        </SummaryLine>
        <SummaryLine $width={553}>
          <span>customer orientated. I am looking for</span>
          <span>challenging and reward.</span>
        </SummaryLine>
      </Summary>
      <SectionTitle>EMPLOYMENT DETAILS</SectionTitle>
      <JobTable>
        <tbody>
          <tr>
            <td><Misspelt>RoadToTheWeb</Misspelt> Ltd</td>
            <td>{"1st Jan 09  to  current"}</td>
          </tr>
          <tr>
            <td>Job Title: Senior Web Developer</td>
            <td />
          </tr>
        </tbody>
      </JobTable>
      <Selection>
        <SelectedLine $blank />
        <SelectedLine>Overall responsibility for the company's web development strategy.</SelectedLine>
        <SelectedLine>Responsible for the motivation and development of 10 members of staff.</SelectedLine>
        <SelectedLine>Credited for key elements of the web 2.0 framework.</SelectedLine>
      </Selection>
    </Scrolled>
  </Page>
);

const ScrollBar = () => (
  <ScrollColumn>
    <SplitBar />
    <button aria-label="View ruler"><RulerIcon /></button>
    <Track>
      <ScrollButton $height={22} aria-label="Scroll up"><Arrow up color="#3d5680" /></ScrollButton>
      <TrackGap $grow={36} />
      <Thumb>
        <svg width="8" height="8" viewBox="0 0 8 8" stroke="#7485a3">
          <path d="M0 .5h8M0 2.500h8M0 4.500h8M0 6.500h8" />
        </svg>
      </Thumb>
      <TrackGap $grow={200} />
      <ScrollButton $height={14} aria-label="Scroll down"><Arrow color="#3d5680" /></ScrollButton>
    </Track>
    <ScrollButton $height={17} aria-label="Previous page"><BrowseIcon kind="prev" /></ScrollButton>
    <ScrollButton $height={17} aria-label="Select browse object"><BrowseIcon kind="object" /></ScrollButton>
    <ScrollButton $height={17} aria-label="Next page"><BrowseIcon kind="next" /></ScrollButton>
  </ScrollColumn>
);

const tabs = ["Home", "Insert", "Page Layout", "References", "Mailings", "Review", "View"];
const views = ["print", "reading", "web", "outline", "draft"];

export default function App() {
  return (
    <Window>
      <GlobalStyle />
      <TitleBar>
        <TitleTools>
          <Orb aria-label="Office menu"><OrbIcon /></Orb>
          <QuickAccess>
            <button aria-label="Save"><SaveIcon /></button>
            <button aria-label="Undo"><UndoIcon /></button>
            <Arrow />
            <button aria-label="Redo"><RedoIcon /></button>
          </QuickAccess>
          <MoreButton aria-label="Customise toolbar"><MoreIcon /></MoreButton>
        </TitleTools>
        <Title>Document1 - Microsoft Word non-commercial use</Title>
        <WindowButtons>
          <WindowButton aria-label="Minimise">
            <svg width="10" height="10" viewBox="0 0 10 10"><path d="M1 6h8v2H1z" fill="#14243c" /></svg>
          </WindowButton>
          <WindowButton aria-label="Restore">
            <svg width="11" height="11" viewBox="0 0 11 11" fill="none" stroke="#14243c">
              <path d="M1 3h7v6.500H1z" strokeWidth="1.600" />
              <path d="M3 1h7v7" />
            </svg>
          </WindowButton>
          <WindowButton $close aria-label="Close">
            <svg width="9" height="8" viewBox="0 0 9 8" stroke="#fff" strokeWidth="1.600"><path d="M1 .5l7 7M8 .5l-7 7" /></svg>
          </WindowButton>
        </WindowButtons>
      </TitleBar>
      <TabStrip>
        {tabs.map((t) => (
          <Tab key={t} $active={t === "Home"}>{t}</Tab>
        ))}
        <HelpButton aria-label="Help"><HelpIcon /></HelpButton>
      </TabStrip>
      <Ribbon>
        <ClipboardGroup />
        <FontGroup />
        <ParagraphGroup />
        <StylesGroup />
        <EditingGroup />
      </Ribbon>
      <Workspace>
        <Swoosh width="640" height="170" viewBox="0 0 640 170">
          <path d="M0 0H640V2Q420 8 236 52Q90 90 0 155z" fill="#a9c3e2" opacity=".6" />
          <path d="M0 0H640V2Q420 8 236 52Q110 78 0 127z" fill="#b2cfee" opacity=".75" />
        </Swoosh>
        <Viewport>
          <DocumentPage />
        </Viewport>
        <ScrollBar />
      </Workspace>
      <StatusBar>
        <StatusCell>Page: 1 of 1</StatusCell>
        <StatusCell>Words: 28/92</StatusCell>
        <StatusCell><ProofIcon /></StatusCell>
        <ViewControls>
          <ViewSet>
            {views.map((v) => (
              <ViewButton key={v} $on={v === "print"} aria-label={`${v} view`}><ViewIcon kind={v} /></ViewButton>
            ))}
          </ViewSet>
          <ZoomLabel>100%</ZoomLabel>
          <button aria-label="Zoom out"><ZoomIcon /></button>
          <ZoomSlider type="range" min="0" max="100" defaultValue="50" aria-label="Zoom" />
          <button aria-label="Zoom in"><ZoomIcon plus /></button>
        </ViewControls>
      </StatusBar>
    </Window>
  );
}
